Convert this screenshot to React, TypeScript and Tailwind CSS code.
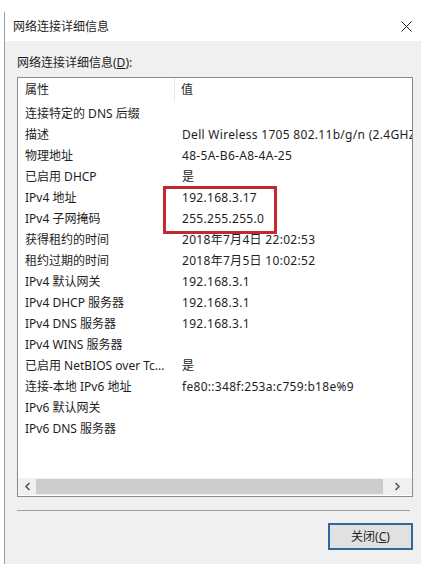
import React from 'react';

// Network connection details dialog (Windows 10 style)

const rows: [string, string][] = [
    ['连接特定的 DNS 后缀', ''],
    ['描述', 'Dell Wireless 1705 802.11b/g/n (2.4GHZ)'],
    ['物理地址', '48-5A-B6-A8-4A-25'],
    ['已启用 DHCP', '是'],
    ['IPv4 地址', '192.168.3.17'],
    ['IPv4 子网掩码', '255.255.255.0'],
    ['获得租约的时间', '2018年7月4日 22:02:53'],
    ['租约过期的时间', '2018年7月5日 10:02:52'],
    ['IPv4 默认网关', '192.168.3.1'],
    ['IPv4 DHCP 服务器', '192.168.3.1'],
    ['IPv4 DNS 服务器', '192.168.3.1'],
    ['IPv4 WINS 服务器', ''],
    ['已启用 NetBIOS over Tc...', '是'],
    ['连接-本地 IPv6 地址', 'fe80::348f:253a:c759:b18e%9'],
    ['IPv6 默认网关', ''],
    ['IPv6 DNS 服务器', ''],
];

const font = { fontFamily: '"Noto Sans", "Noto Sans CJK SC", sans-serif' };

export default function App() {
    return (
        <div
            className="w-[421px] h-[564px] bg-white overflow-hidden pt-[12px] pl-[4px] text-[12px] text-[#1e1e1e]"
            style={font}
        >
            <div className="h-full border-l border-[#8aa2b6] flex flex-col">
                {/* Title bar */}
                <div className="h-[29px] bg-white flex items-center justify-between pl-[8px] pr-[9px] shrink-0">
                    <span className="leading-none">网络连接详细信息</span>
                    <svg width="11" height="11" viewBox="0 0 11 11">
                        <path d="M0.5 0.5 L10.5 10.5 M10.5 0.5 L0.5 10.5" stroke="#222" strokeWidth="1" />
                    </svg>
                </div>

                {/* Body */}
                <div className="flex-1 bg-[#f0f0f0] pl-[12px] pr-[8px] pt-[15px]">
                    <div className="leading-[14px] h-[21px]">
                        网络连接详细信息(<span className="underline">D</span>):
                    </div>

                    {/* List view */}
                    <div className="relative w-[396px] h-[420px] border border-[#8a8a8a] bg-white flex flex-col">
                        <div className="h-[23px] flex items-center shrink-0">
                            <div className="w-[157px] pl-[7px] h-full flex items-center border-r border-[#e8e8e8]">属性</div>
                            <div className="pl-[6px]">值</div>
                        </div>
                        <div className="pt-[2px] flex-1 overflow-hidden">
                            {rows.map(([k, v]) => (
                                <div key={k} className="h-[21px] flex items-center whitespace-nowrap">
                                    <div className="w-[157px] pl-[7px] shrink-0">{k}</div>
                                    <div className="pl-[7px] tracking-[0.3px]">{v}</div>
                                </div>
                            ))}
                        </div>
                        {/* Horizontal scrollbar */}
                        <div className="h-[17px] bg-[#f0f0f0] flex items-center shrink-0 mb-[1px]">
                            <div className="w-[18px] flex justify-center">
                                <svg width="7" height="9" viewBox="0 0 7 9">
                                    <path d="M5.5 1 L2 4.5 L5.5 8" stroke="#555" strokeWidth="1.6" fill="none" />
                                </svg>
                            </div>
                            <div className="h-[15px] w-[347px] bg-[#cdcdcd]" />
                            <div className="flex-1 flex justify-center">
                                <svg width="7" height="9" viewBox="0 0 7 9">
                                    <path d="M1.5 1 L5 4.5 L1.5 8" stroke="#555" strokeWidth="1.6" fill="none" />
                                </svg>
                            </div>
                        </div>

                        {/* Red highlight box */}
                        <div className="absolute left-[145px] top-[108px] w-[114px] h-[48px] border-[3px] border-[#c22a30]" />
                    </div>

                    {/* Separator */}
                    <div className="mt-[13px] w-[393px] border-t border-[#a0a0a0]" />

                    {/* Button */}
                    <div className="flex justify-end w-[396px] mt-[12px]">
                        <button className="w-[85px] h-[27px] bg-[#e1e1e1] border-2 border-[#2d6a9b] flex items-center justify-center">
                            关闭(<span className="underline">C</span>)
                        </button>
                    </div>
                </div>
            </div>
        </div>
    );
}
